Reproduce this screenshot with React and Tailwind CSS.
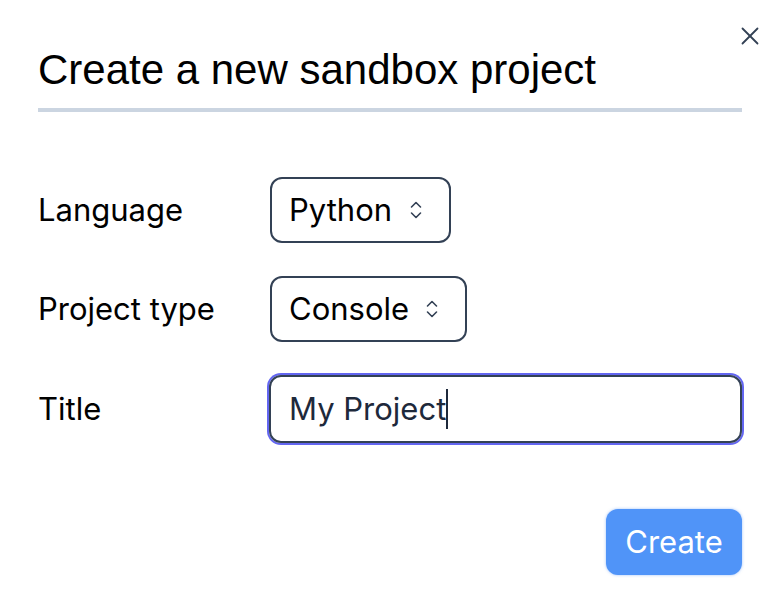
import React from 'react';

const ChevronUpDown = () => (
  <svg width="14" height="20" viewBox="0 0 14 20" fill="none" stroke="#334155" strokeWidth="1.6" strokeLinecap="round" strokeLinejoin="round">
    <path d="M2.5 7 L7 2.5 L11.5 7" />
    <path d="M2.5 13 L7 17.5 L11.5 13" />
  </svg>
);

const Select = ({ value, width }) => (
  <div className={`flex items-center justify-between h-[66px] border-2 border-[#334155] rounded-[12px] pl-[17px] pr-[26px] ${width}`}>
    <span>{value}</span>
    <ChevronUpDown />
  </div>
);

export default function App() {
  return (
    <div className="relative w-[778px] h-[614px] bg-white pl-[38px] pr-[36px] pt-[46px] text-black" style={{ fontFamily: 'Inter, "Noto Sans", sans-serif' }}>
      {/* close */}
      <button className="absolute top-[27px] right-[19px] w-[18px] h-[18px] flex items-center justify-center">
        <svg width="18" height="18" viewBox="0 0 18 18" stroke="#334155" strokeWidth="1.8" strokeLinecap="round">
          <path d="M1.5 1.5 L16.5 16.5" />
          <path d="M16.5 1.5 L1.5 16.5" />
        </svg>
      </button>

      <h1 className="text-[42px] leading-[48px]" style={{ fontFamily: '"Liberation Sans", Arial, sans-serif' }}>
        Create a new sandbox project
      </h1>
      <div className="mt-[14px] h-[4px] bg-[#cbd5e1]" />

      <div className="mt-[65px] flex flex-col gap-[33px] text-[31px]">
        <div className="flex items-center">
          <div className="w-[232px]">Language</div>
          <Select value="Python" width="w-[181px]" />
        </div>
        <div className="flex items-center">
          <div className="w-[232px]">Project type</div>
          <Select value="Console" width="w-[197px]" />
        </div>
        <div className="flex items-center">
          <div className="w-[231px]">Title</div>
          <div className="flex-1 h-[68px] rounded-[12px] border-2 border-[#334155] ring-2 ring-[#6366f1] flex items-center pl-[18px] text-[#1e293b]">
            <span>My Project</span>
            <span className="inline-block w-[2px] h-[40px] bg-[#1e293b]" />
          </div>
        </div>
      </div>

      <div className="mt-[66px] flex justify-end">
        <button className="h-[66px] w-[136px] rounded-[12px] bg-[#5094f8] text-white text-[31px] shadow-[0_0_3px_rgba(59,130,246,0.5)]">
          Create
        </button>
      </div>
    </div>
  );
}
